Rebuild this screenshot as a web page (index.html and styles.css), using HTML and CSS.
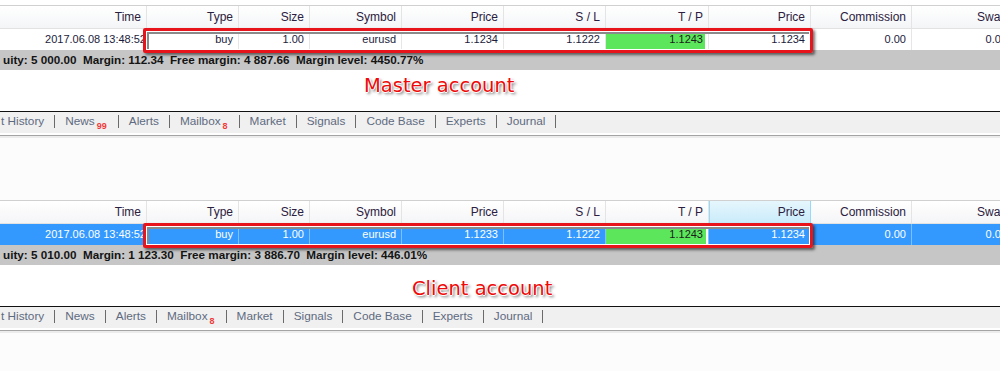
FILE: index.html
```html
<!DOCTYPE html>
<html lang="en">
<head>
  <meta charset="UTF-8" />
  <title>Master / Client copy</title>
  <link rel="stylesheet" href="styles.css">
</head>
<body>
  <div class="panel panel-master">
    <div class="grid head">
      <div class="cell">Time</div>
      <div class="cell">Type</div>
      <div class="cell">Size</div>
      <div class="cell">Symbol</div>
      <div class="cell">Price</div>
      <div class="cell">S / L</div>
      <div class="cell">T / P</div>
      <div class="cell">Price</div>
      <div class="cell">Commission</div>
      <div class="cell">Swap</div>
    </div>
    <div class="row-wrap">
      <div class="grid row">
        <div class="cell time">2017.06.08 13:48:52</div>
        <div class="cell">buy</div>
        <div class="cell">1.00</div>
        <div class="cell">eurusd</div>
        <div class="cell">1.1234</div>
        <div class="cell">1.1222</div>
        <div class="cell tp">1.1243</div>
        <div class="cell">1.1234</div>
        <div class="cell">0.00</div>
        <div class="cell">0.00</div>
      </div>
      <div class="mark"></div>
    </div>
    <div class="status">uity: 5&nbsp;000.00&nbsp;&nbsp;Margin: 112.34&nbsp;&nbsp;Free margin: 4&nbsp;887.66&nbsp;&nbsp;Margin level: 4450.77%</div>
    <div class="caption">Master account</div>
    <div class="tabs">
      <span class="tab first">t History</span><span class="sep"></span>
      <span class="tab">News<sub class="count">99</sub></span><span class="sep"></span>
      <span class="tab">Alerts</span><span class="sep"></span>
      <span class="tab">Mailbox<sub class="count">8</sub></span><span class="sep"></span>
      <span class="tab">Market</span><span class="sep"></span>
      <span class="tab">Signals</span><span class="sep"></span>
      <span class="tab">Code Base</span><span class="sep"></span>
      <span class="tab">Experts</span><span class="sep"></span>
      <span class="tab">Journal</span><span class="sep"></span>
    </div>
    <div class="pane"></div>
  </div>

  <div class="panel panel-client">
    <div class="grid head">
      <div class="cell">Time</div>
      <div class="cell">Type</div>
      <div class="cell">Size</div>
      <div class="cell">Symbol</div>
      <div class="cell">Price</div>
      <div class="cell">S / L</div>
      <div class="cell">T / P</div>
      <div class="cell sorted">Price</div>
      <div class="cell">Commission</div>
      <div class="cell">Swap</div>
    </div>
    <div class="row-wrap">
      <div class="grid row selected">
        <div class="cell time">2017.06.08 13:48:52</div>
        <div class="cell">buy</div>
        <div class="cell">1.00</div>
        <div class="cell">eurusd</div>
        <div class="cell">1.1233</div>
        <div class="cell">1.1222</div>
        <div class="cell tp">1.1243</div>
        <div class="cell">1.1234</div>
        <div class="cell">0.00</div>
        <div class="cell">0.00</div>
      </div>
      <div class="mark"></div>
    </div>
    <div class="status">uity: 5&nbsp;010.00&nbsp;&nbsp;Margin: 1&nbsp;123.30&nbsp;&nbsp;Free margin: 3&nbsp;886.70&nbsp;&nbsp;Margin level: 446.01%</div>
    <div class="caption">Client account</div>
    <div class="tabs">
      <span class="tab first">t History</span><span class="sep"></span>
      <span class="tab">News</span><span class="sep"></span>
      <span class="tab">Alerts</span><span class="sep"></span>
      <span class="tab">Mailbox<sub class="count">8</sub></span><span class="sep"></span>
      <span class="tab">Market</span><span class="sep"></span>
      <span class="tab">Signals</span><span class="sep"></span>
      <span class="tab">Code Base</span><span class="sep"></span>
      <span class="tab">Experts</span><span class="sep"></span>
      <span class="tab">Journal</span><span class="sep"></span>
    </div>
    <div class="pane"></div>
  </div>
</body>
</html>
```

FILE: styles.css
```css
html, body {
  margin: 0;
  padding: 0;
  background: #fff;
  font-family: 'Liberation Sans', Arial, sans-serif;
  overflow: hidden;
}
body {
  padding-top: 5px;
}
.panel {
  border-top: 1px solid #d0d0d0;
  overflow: hidden;
}
.grid {
  display: grid;
  grid-template-columns: 147px 92px 71px 92px 102px 102px 103px 102px 101px 101px;
  width: 1013px;
}
.cell {
  text-align: right;
  padding-right: 5px;
  border-right: 1px solid #e6e6e6;
  white-space: nowrap;
  overflow: hidden;
}
.head {
  height: 22px;
  line-height: 22px;
  font-size: 12px;
  color: #2b2040;
  background: linear-gradient(#ffffff, #f4f5f7);
  border-bottom: 1px solid #e2e2e2;
}
.head .cell {
  border-right-color: #e4e4e4;
}
.head .sorted {
  background: linear-gradient(#e6f6fd, #c9ebfa);
  border-left: 1px solid #96d9f9;
  border-right-color: #96d9f9;
}
.row-wrap {
  position: relative;
}
.row {
  height: 21px;
  line-height: 21px;
  font-size: 11px;
  color: #1c1c3c;
  background: #fff;
}
.row .time {
  padding-right: 0;
}
.row .tp {
  background: #5ce65c;
  color: #1c1c1c;
  box-shadow: inset -3px 0 #fff;
}
.row.selected {
  background: #3399ff;
  color: #fff;
}
.row.selected .cell {
  border-right-color: #7fbfff;
}
.row.selected .tp {
  color: #1c1c1c;
  box-shadow: inset -2px 0 #fff;
}
.mark {
  position: absolute;
  top: -1px;
  left: 143px;
  width: 670px;
  height: 25px;
  box-sizing: border-box;
  border: 3px solid #e8141c;
  border-radius: 2px;
  box-shadow: inset 0 0 0 1px #fff, inset 1px 1px 0 2px #8a8a8a, 2px 2px 3px rgba(0, 0, 0, 0.55);
}
.status {
  height: 20px;
  line-height: 20px;
  background: #c6c6c6;
  font-size: 11.7px;
  font-weight: bold;
  color: #141414;
  padding-left: 3px;
  white-space: nowrap;
}
.caption {
  height: 41px;
  box-sizing: border-box;
  font-family: 'DejaVu Sans', Verdana, sans-serif;
  font-size: 19.5px;
  line-height: 22px;
  color: #ee0a0a;
  text-shadow: -1px 0 #fff, 1px 0 #fff, 0 -1px #fff, 0 1px #fff, 2px 2px 3px rgba(0, 0, 0, 0.6);
}
.panel-master .caption {
  padding: 5px 0 0 364px;
}
.panel-client .caption {
  padding: 13px 0 0 412px;
}
.tabs {
  display: flex;
  align-items: center;
  height: 18px;
  padding-bottom: 3px;
  background: #f0f0f0;
  border-top: 1px solid #111;
  border-bottom: 2px solid #fff;
  font-size: 11.8px;
  color: #5e6a80;
  white-space: nowrap;
}
.tab {
  padding: 0 10px;
  line-height: 14px;
}
.tab.first {
  padding-left: 1px;
}
.count {
  font-size: 9px;
  font-weight: bold;
  line-height: 0;
  color: #f03a3a;
  margin: 0 1px 0 2px;
  vertical-align: -4px;
}
.sep {
  width: 1px;
  height: 13px;
  background: #6a6a6a;
}
.pane {
  height: 64px;
  background: #fcfcfc;
  border-top: 1px solid #a4a4a4;
  box-shadow: inset 0 2px #ececec;
}
.panel-client .pane {
  height: 40px;
}
```
